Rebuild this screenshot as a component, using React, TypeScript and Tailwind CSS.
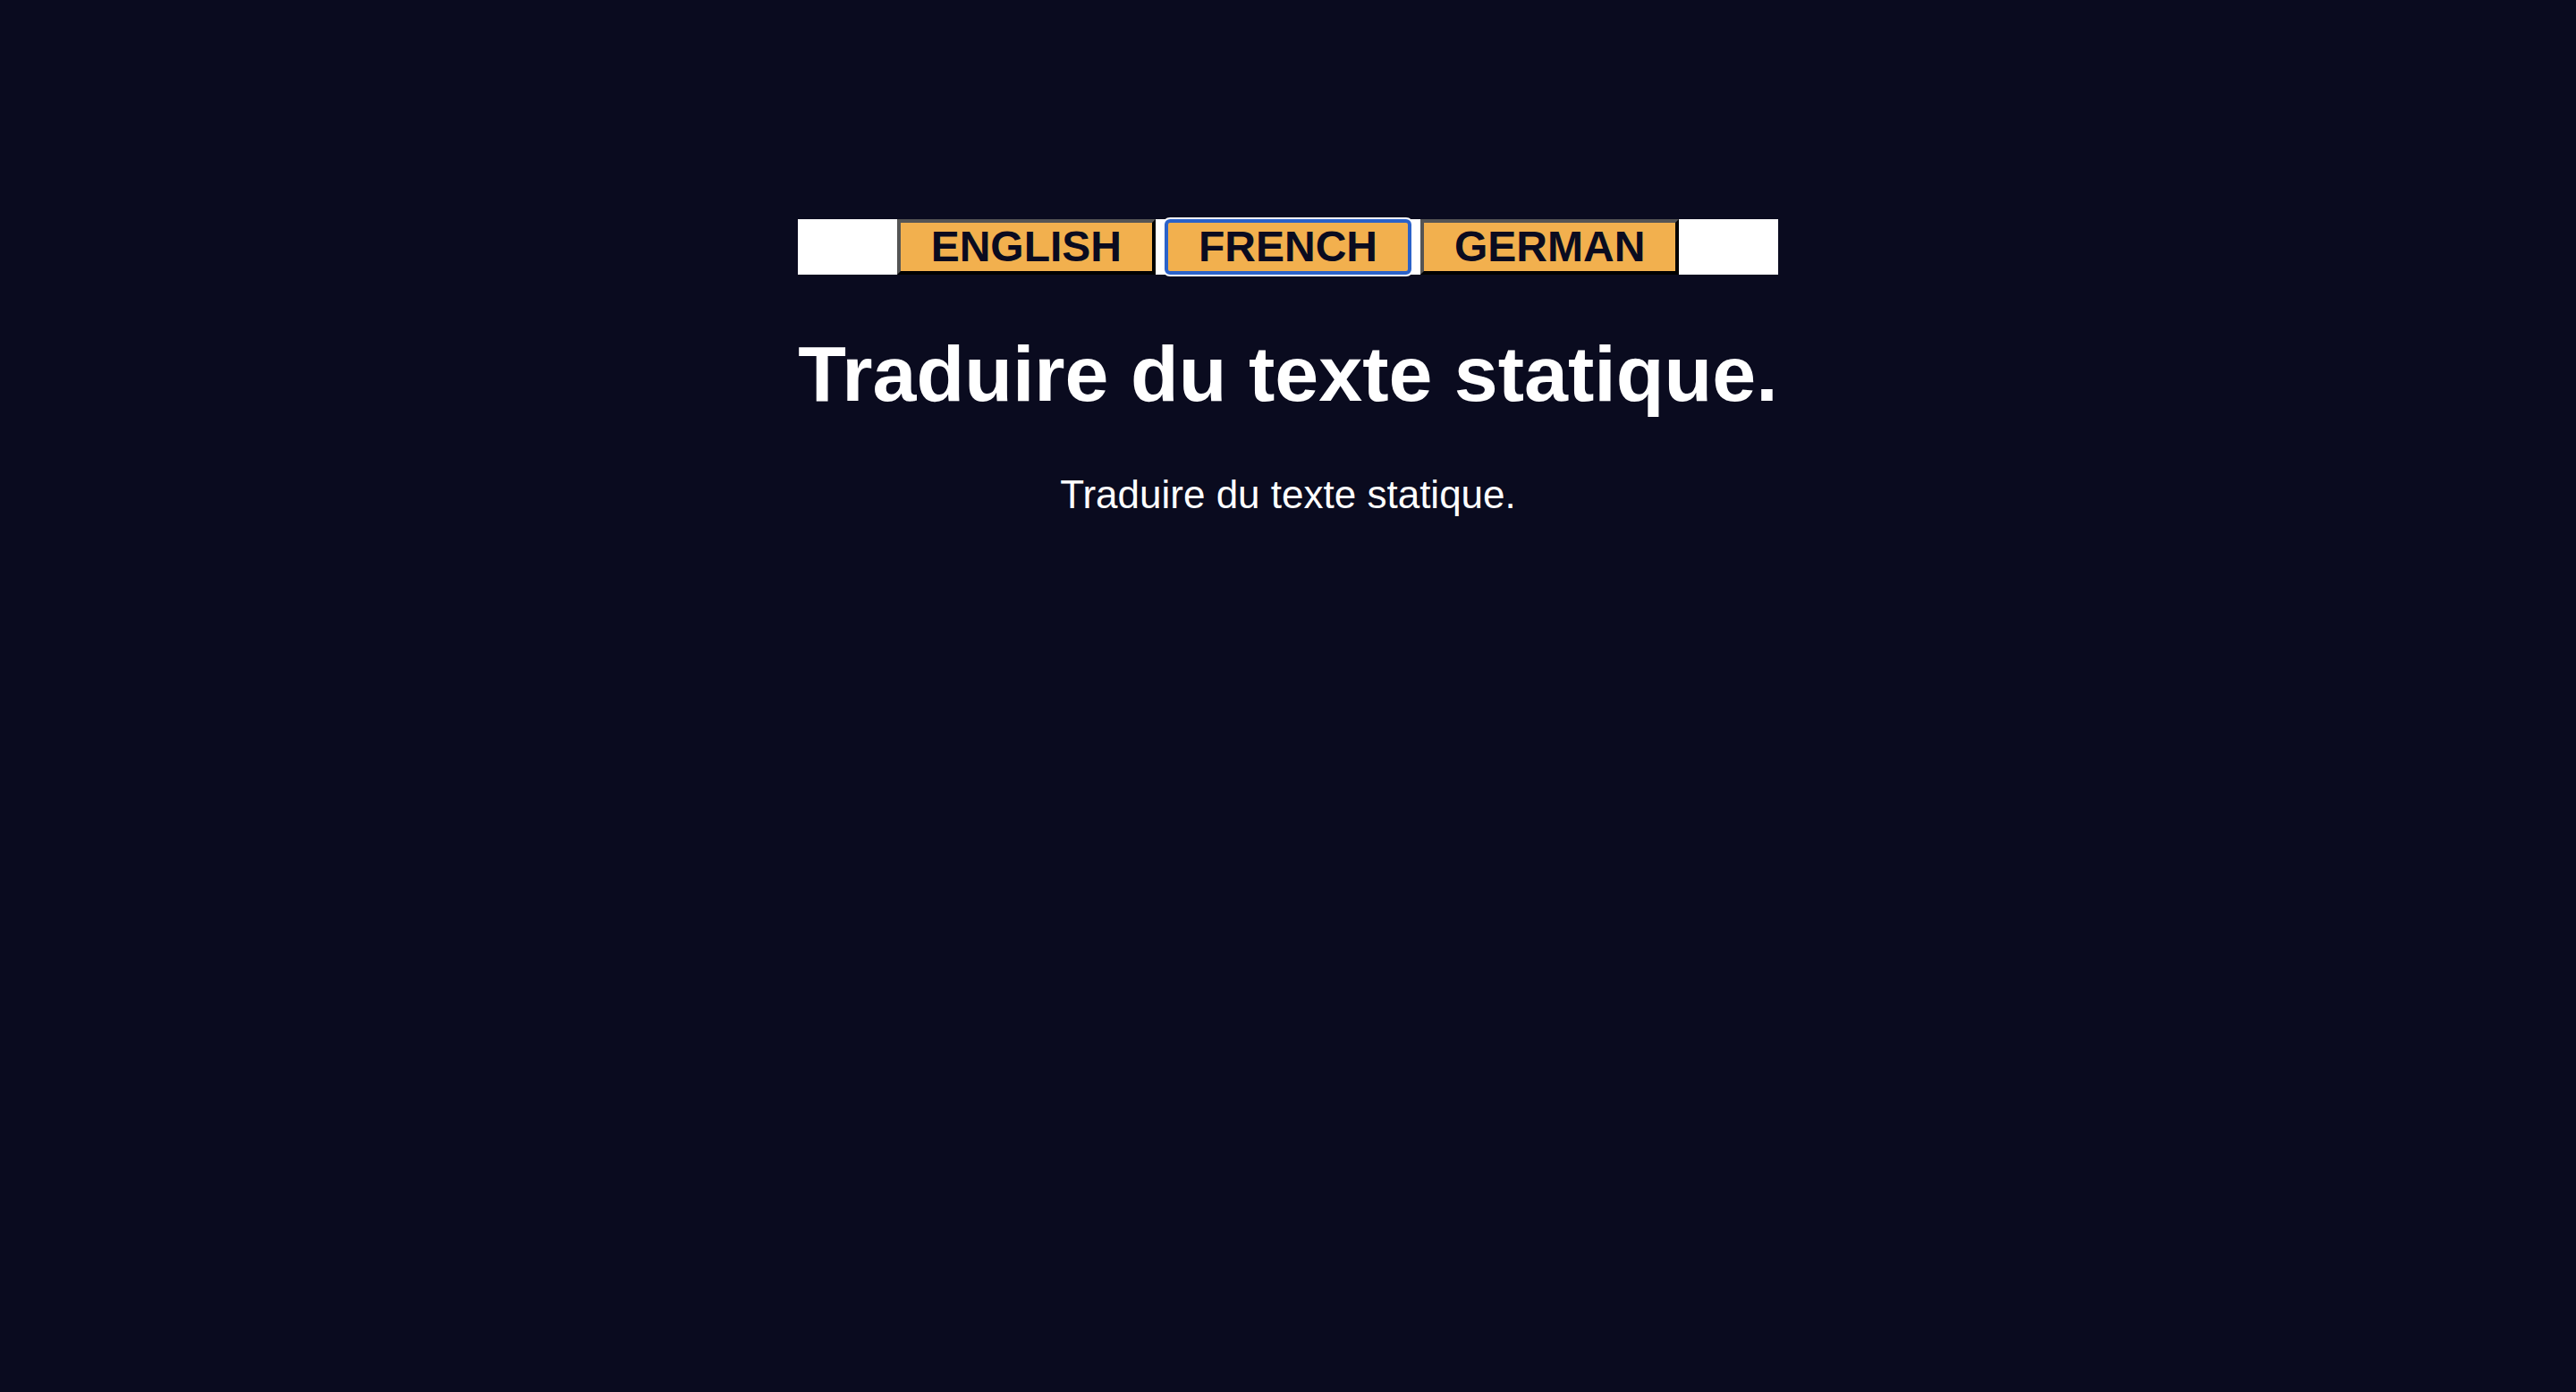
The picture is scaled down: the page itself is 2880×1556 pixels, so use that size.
import { useState } from 'react';

const languages = [
  { code: 'en', label: 'ENGLISH' },
  { code: 'fr', label: 'FRENCH' },
  { code: 'de', label: 'GERMAN' },
];

export default function App() {
  const [active, setActive] = useState('fr');

  return (
    <div className="min-h-screen bg-[#0a0b1f] flex justify-center pt-[245px] font-['Liberation_Sans',Arial,sans-serif]">
      <div className="w-fit flex flex-col items-center">
        {/* Language switcher */}
        <div className="w-full bg-white flex justify-center gap-[10px]">
          {languages.map((lang) =>
            lang.code === active ? (
              <button
                key={lang.code}
                onClick={() => setActive(lang.code)}
                className="h-[62px] px-[34px] bg-[#f2b04e] text-[#0a0b1f] text-[48px] font-bold leading-[54px] border-4 border-[#2b62c9] rounded-[6px] shadow-[0_0_0_2px_#ffffff]"
              >
                {lang.label}
              </button>
            ) : (
              <button
                key={lang.code}
                onClick={() => setActive(lang.code)}
                className="h-[62px] px-[34px] bg-[#f2b04e] text-[#0a0b1f] text-[48px] font-bold leading-[54px] border-4 border-t-[#555555] border-l-[#555555] border-b-black border-r-black"
              >
                {lang.label}
              </button>
            )
          )}
        </div>

        <h1 className="mt-[60px] text-white text-[88px] font-bold leading-[1.15] whitespace-nowrap">
          Traduire du texte statique.
        </h1>

        <p className="mt-[60px] text-white text-[44px] leading-[1.15]">Traduire du texte statique.</p>
      </div>
    </div>
  );
}
